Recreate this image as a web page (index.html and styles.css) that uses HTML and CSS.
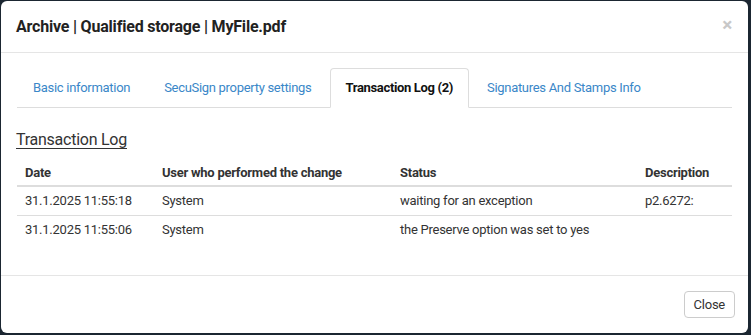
FILE: index.html
```html
<!DOCTYPE html>
<html lang="en">
<head>
    <meta charset="UTF-8">
    <title>Archive | Qualified storage | MyFile.pdf</title>
    <link rel="stylesheet" href="styles.css">
</head>
<body>
    <div class="modal">
        <div class="modal-header">
            <div class="modal-title">Archive | Qualified storage | MyFile.pdf</div>
            <span class="close">&times;</span>
        </div>

        <div class="modal-body">
            <!-- Pestañas -->
            <ul class="tabs">
                <li class="tab"><a href="#">Basic information</a></li>
                <li class="tab"><a href="#">SecuSign property settings</a></li>
                <li class="tab active"><a href="#">Transaction Log (2)</a></li>
                <li class="tab"><a href="#">Signatures And Stamps Info</a></li>
            </ul>

            <h3 class="section-title">Transaction Log</h3>

            <table class="log-table">
                <thead>
                    <tr>
                        <th class="col-date">Date</th>
                        <th class="col-user">User who performed the change</th>
                        <th class="col-status">Status</th>
                        <th>Description</th>
                    </tr>
                </thead>
                <tbody>
                    <tr>
                        <td>31.1.2025 11:55:18</td>
                        <td>System</td>
                        <td>waiting for an exception</td>
                        <td>p2.6272:</td>
                    </tr>
                    <tr>
                        <td>31.1.2025 11:55:06</td>
                        <td>System</td>
                        <td>the Preserve option was set to yes</td>
                        <td></td>
                    </tr>
                </tbody>
            </table>
        </div>

        <div class="modal-footer">
            <button class="button">Close</button>
        </div>
    </div>
</body>
</html>
```

FILE: styles.css
```css
:root {
    --text-color: #333;
    --link-color: #3a87c8;
    --border-color: #e5e5e5;
    --backdrop: #1b2631;
}

body, html {
    margin: 0;
    padding: 0;
    font-family: Roboto, "Liberation Sans", sans-serif;
    font-size: 13px;
    letter-spacing: -0.25px;
    color: var(--text-color);
    background-color: var(--backdrop);
}

.modal {
    margin: 1px 3px 1px 1px;
    background-color: #fff;
    border-radius: 6px;
    height: 332px;
    display: flex;
    flex-direction: column;
}

.modal-header {
    display: flex;
    justify-content: space-between;
    align-items: center;
    padding: 0 15px 0 15px;
    height: 51px;
    border-bottom: 1px solid var(--border-color);
}

.modal-title {
    font-size: 16px;
    font-weight: 700;
    letter-spacing: -0.2px;
    color: #222;
}

.close {
    font-size: 19px;
    font-weight: 700;
    color: #c8c8c8;
    line-height: 1;
    margin-top: -5px;
    margin-right: 1px;
}

.modal-body {
    flex: 1;
    padding: 15px 16px 0 16px;
}

.tabs {
    display: flex;
    list-style: none;
    margin: 0;
    padding: 0;
    border-bottom: 1px solid #ddd;
}

.tab {
    margin-right: 2px;
}

.tab a {
    display: block;
    padding: 10px 15px 11px 15px;
    line-height: 17px;
    letter-spacing: -0.3px;
    color: var(--link-color);
    text-decoration: none;
    border: 1px solid transparent;
    border-radius: 4px 4px 0 0;
    margin-bottom: -1px;
}

.tab.active a {
    color: #111;
    font-weight: 700;
    letter-spacing: -0.35px;
    background-color: #fff;
    border-color: #ddd;
    border-bottom-color: #fff;
}

.section-title {
    font-size: 16px;
    font-weight: 400;
    letter-spacing: -0.25px;
    text-decoration: underline;
    text-underline-offset: 3px;
    margin: 22px 0 10px -1px;
    line-height: 20px;
}

.log-table {
    width: 100%;
    border-collapse: collapse;
}

.log-table th {
    text-align: left;
    font-weight: 700;
    padding: 6px 8px 5px 8px;
    line-height: 14px;
    border-bottom: 2px solid #ddd;
}

.log-table td {
    padding: 7px 8px;
    line-height: 14px;
    border-top: 1px solid #ddd;
}

.log-table tbody tr:first-child td {
    border-top: none;
}

.col-date {
    width: 121px;
}

.col-user {
    width: 222px;
}

.col-status {
    width: 229px;
}

.modal-footer {
    display: flex;
    justify-content: flex-end;
    padding: 15px 13px 15px 15px;
    border-top: 1px solid var(--border-color);
}

.button {
    font-family: Roboto, "Liberation Sans", sans-serif;
    font-size: 13px;
    letter-spacing: -0.25px;
    color: var(--text-color);
    background-color: #fff;
    border: 1px solid #ccc;
    border-radius: 4px;
    padding: 5px 9px;
    line-height: 15px;
    cursor: pointer;
}
```
